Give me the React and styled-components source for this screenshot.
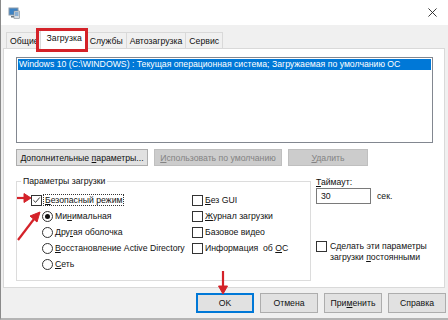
import React from "react";
import styled, { createGlobalStyle, css } from "styled-components";

const GlobalStyle = createGlobalStyle`
  html, body {
    margin: 0;
    padding: 0;
    background: #f0f0f0;
  }
  * {
    box-sizing: border-box;
  }
`;

const FONT = `"Liberation Sans", Arial, sans-serif`;

export default function App() {
  return (
    <>
      <GlobalStyle />
      <Window>
        <TitleBar>
          <AppIcon viewBox="0 0 12 12">
            <rect x="0.5" y="0.5" width="10" height="8" fill="#8c9aa8" />
            <rect x="1.5" y="1.5" width="8" height="6" fill="#3b82c4" />
            <rect x="3" y="9" width="5" height="1.5" fill="#6b7680" />
            <rect x="6" y="4" width="5.5" height="7.5" fill="#d8dde2" stroke="#7d8790" strokeWidth="0.6" />
            <rect x="7" y="5.5" width="3.5" height="1" fill="#3b82c4" />
            <rect x="7" y="7.5" width="3.5" height="1" fill="#3b82c4" />
          </AppIcon>
          <CloseIcon viewBox="0 0 10 10">
            <path d="M0.5 0.5 L9.5 9.5 M9.5 0.5 L0.5 9.5" stroke="#222" strokeWidth="1" />
          </CloseIcon>
        </TitleBar>

        <TabStrip>
          <Tab>Общие</Tab>
          <Tab $active>Загрузка</Tab>
          <Tab>Службы</Tab>
          <Tab>Автозагрузка</Tab>
          <Tab>Сервис</Tab>
        </TabStrip>

        <Panel>
          <ListBox>
            <ListItem $selected>
              Windows 10 (C:\WINDOWS) : Текущая операционная система; Загружаемая по умолчанию ОС
            </ListItem>
          </ListBox>

          <ButtonRow>
            <PushButton $w={132}>
              Дополнительные <u>п</u>араметры...
            </PushButton>
            <PushButton $w={128} disabled>
              <u>И</u>спользовать по умолчанию
            </PushButton>
            <PushButton $w={80} disabled>
              <u>У</u>далить
            </PushButton>
          </ButtonRow>

          <LowerArea>
            <GroupBox>
              <Legend>Параметры загрузки</Legend>
              <GroupGrid>
                <Option>
                  <CheckBox>
                    <svg viewBox="0 0 10 10" width="10" height="10">
                      <path d="M1.5 5.2 L4 7.6 L8.6 2.2" fill="none" stroke="#222" strokeWidth="1" />
                    </svg>
                  </CheckBox>
                  <FocusLabel>
                    <u>Б</u>езопасный режим
                  </FocusLabel>
                </Option>
                <Option>
                  <CheckBox />
                  <span>
                    <u>Б</u>ез GUI
                  </span>
                </Option>

                <Option $indent>
                  <Radio $checked />
                  <span>
                    Ми<u>н</u>имальная
                  </span>
                </Option>
                <Option>
                  <CheckBox />
                  <span>
                    <u>Ж</u>урнал загрузки
                  </span>
                </Option>

                <Option $indent>
                  <Radio />
                  <span>
                    Дру<u>г</u>ая оболочка
                  </span>
                </Option>
                <Option>
                  <CheckBox />
                  <span>Базовое видео</span>
                </Option>

                <Option $indent>
                  <Radio />
                  <span>
                    <u>В</u>осстановление Active Directory
                  </span>
                </Option>
                <Option>
                  <CheckBox />
                  <span>
                    Информация&nbsp; об <u>О</u>С
                  </span>
                </Option>

                <Option $indent>
                  <Radio />
                  <span>
                    <u>С</u>еть
                  </span>
                </Option>
              </GroupGrid>
            </GroupBox>

            <SideColumn>
              <FieldLabel>
                <u>Т</u>аймаут:
              </FieldLabel>
              <TimeoutRow>
                <TextInput>30</TextInput>
                <span>сек.</span>
              </TimeoutRow>
              <PersistRow>
                <CheckBox />
                <span>
                  Сделать эти параметры
                  <br />
                  загрузки <u>п</u>остоянными
                </span>
              </PersistRow>
            </SideColumn>
          </LowerArea>
        </Panel>

        <Footer>
          <DialogButton $default>OK</DialogButton>
          <DialogButton>Отмена</DialogButton>
          <DialogButton>
            При<u>м</u>енить
          </DialogButton>
          <DialogButton>Справка</DialogButton>
        </Footer>

        <Annotations viewBox="0 0 448 320">
          <rect x="37.5" y="29.5" width="49" height="21" fill="none" stroke="#d42229" strokeWidth="3" />
          <g fill="#d42229" stroke="#d42229">
            <line x1="17" y1="198" x2="25" y2="198" strokeWidth="2.2" />
            <polygon points="24,193.5 31,198 24,202.5" />
            <line x1="18" y1="240" x2="34" y2="219" strokeWidth="2.2" />
            <polygon points="30,216 40,212 37,222" />
            <line x1="223" y1="271" x2="223" y2="287" strokeWidth="2.2" />
            <polygon points="218.5,286 227.5,286 223,294" />
          </g>
        </Annotations>
      </Window>
    </>
  );
}

const Window = styled.div`
  position: relative;
  width: 448px;
  height: 320px;
  background: #f0f0f0;
  border-left: 1px solid #8a8a8a;
  border-bottom: 2px solid #b4b4b4;
  display: flex;
  flex-direction: column;
  font-family: ${FONT};
  font-size: 8.7px;
  color: #111;
  overflow: hidden;
`;

const TitleBar = styled.div`
  height: 25px;
  background: #ffffff;
  display: flex;
  align-items: center;
  justify-content: space-between;
  padding: 0 11px 0 7px;
`;

const AppIcon = styled.svg`
  width: 12px;
  height: 12px;
`;

const CloseIcon = styled.svg`
  width: 9px;
  height: 9px;
`;

const TabStrip = styled.div`
  height: 23px;
  display: flex;
  align-items: flex-end;
  padding-left: 5px;
  position: relative;
  z-index: 1;
`;

const Tab = styled.div`
  height: 16px;
  padding: 0 3px;
  display: flex;
  align-items: center;
  background: #f0f0f0;
  border: 1px solid #d9d9d9;
  border-bottom: none;
  margin-right: -1px;

  ${(p) =>
    p.$active &&
    css`
      background: #ffffff;
      padding: 0 5px 3px 6px;
      margin: 0 -2px -1px -2px;
      position: relative;
      z-index: 2;
      height: 21px;
    `}
`;

const Panel = styled.div`
  height: 240px;
  margin: 0 3px 0 2px;
  background: #ffffff;
  border: 1px solid #d9d9d9;
  padding: 8px 11px 0 12px;
`;

const ListBox = styled.div`
  height: 86px;
  border: 1px solid #828790;
  padding: 1px;
  background: #fff;
`;

const ListItem = styled.div`
  height: 11px;
  line-height: 11px;
  padding-left: 1px;
  white-space: nowrap;
  overflow: hidden;
  ${(p) =>
    p.$selected &&
    css`
      background: #0078d7;
      color: #ffffff;
    `}
`;

const ButtonRow = styled.div`
  display: flex;
  gap: 6px;
  margin-top: 6px;
`;

const PushButton = styled.button`
  width: ${(p) => p.$w}px;
  height: 17px;
  padding: 0;
  font: inherit;
  color: #111;
  background: #e1e1e1;
  border: 1px solid #adadad;
  white-space: nowrap;

  &:disabled {
    background: #cccccc;
    border-color: #bfbfbf;
    color: #838383;
  }
`;

const LowerArea = styled.div`
  display: flex;
  gap: 5px;
  margin-top: 9px;
`;

const GroupBox = styled.fieldset`
  width: 295px;
  height: 106px;
  margin: 0;
  padding: 0;
  min-width: 0;
  border: 1px solid #dcdcdc;
`;

const Legend = styled.legend`
  margin-left: 4px;
  padding: 0 2px;
  line-height: 12px;
`;

const GroupGrid = styled.div`
  display: grid;
  grid-template-columns: 161px auto;
  grid-auto-rows: 16px;
  padding: 5px 0 0 14px;
`;

const Option = styled.div`
  display: flex;
  align-items: center;
  gap: 2px;
  white-space: nowrap;
  padding-left: ${(p) => (p.$indent ? "11px" : "0")};
`;

const CheckBox = styled.span`
  width: 11px;
  height: 11px;
  flex: none;
  border: 1px solid #333333;
  background: #ffffff;
  display: flex;
  align-items: center;
  justify-content: center;
`;

const Radio = styled.span`
  width: 11px;
  height: 11px;
  flex: none;
  border: 1px solid #333333;
  border-radius: 50%;
  background: #ffffff;
  display: flex;
  align-items: center;
  justify-content: center;

  &::after {
    content: "";
    width: 5px;
    height: 5px;
    border-radius: 50%;
    background: ${(p) => (p.$checked ? "#111" : "transparent")};
  }
`;

const FocusLabel = styled.span`
  outline: 1px dotted #333;
  outline-offset: 0;
  padding: 0 1px;
`;

const SideColumn = styled.div`
  display: flex;
  flex-direction: column;
  padding-top: 1px;
  white-space: nowrap;
`;

const FieldLabel = styled.div`
  line-height: 12px;
`;

const TimeoutRow = styled.div`
  display: flex;
  align-items: center;
  gap: 6px;
  margin-top: 0;
`;

const TextInput = styled.div`
  width: 55px;
  height: 16px;
  border: 1px solid #7a7a7a;
  background: #fff;
  padding-left: 4px;
  line-height: 14px;
`;

const PersistRow = styled.div`
  display: flex;
  align-items: flex-start;
  gap: 3px;
  margin-top: 37px;
  line-height: 11px;
`;

const Footer = styled.div`
  display: flex;
  justify-content: flex-end;
  gap: 6px;
  padding: 5px 2px 0 0;
`;

const DialogButton = styled.button`
  width: 58px;
  height: 20px;
  padding: 0;
  font: inherit;
  color: #111;
  background: #e1e1e1;
  border: 1px solid #adadad;

  ${(p) =>
    p.$default &&
    css`
      border-color: #0078d7;
      box-shadow: inset 0 0 0 1px #0078d7;
    `}
`;

const Annotations = styled.svg`
  position: absolute;
  left: -1px;
  top: 0;
  width: 448px;
  height: 320px;
  pointer-events: none;
  z-index: 5;
`;
